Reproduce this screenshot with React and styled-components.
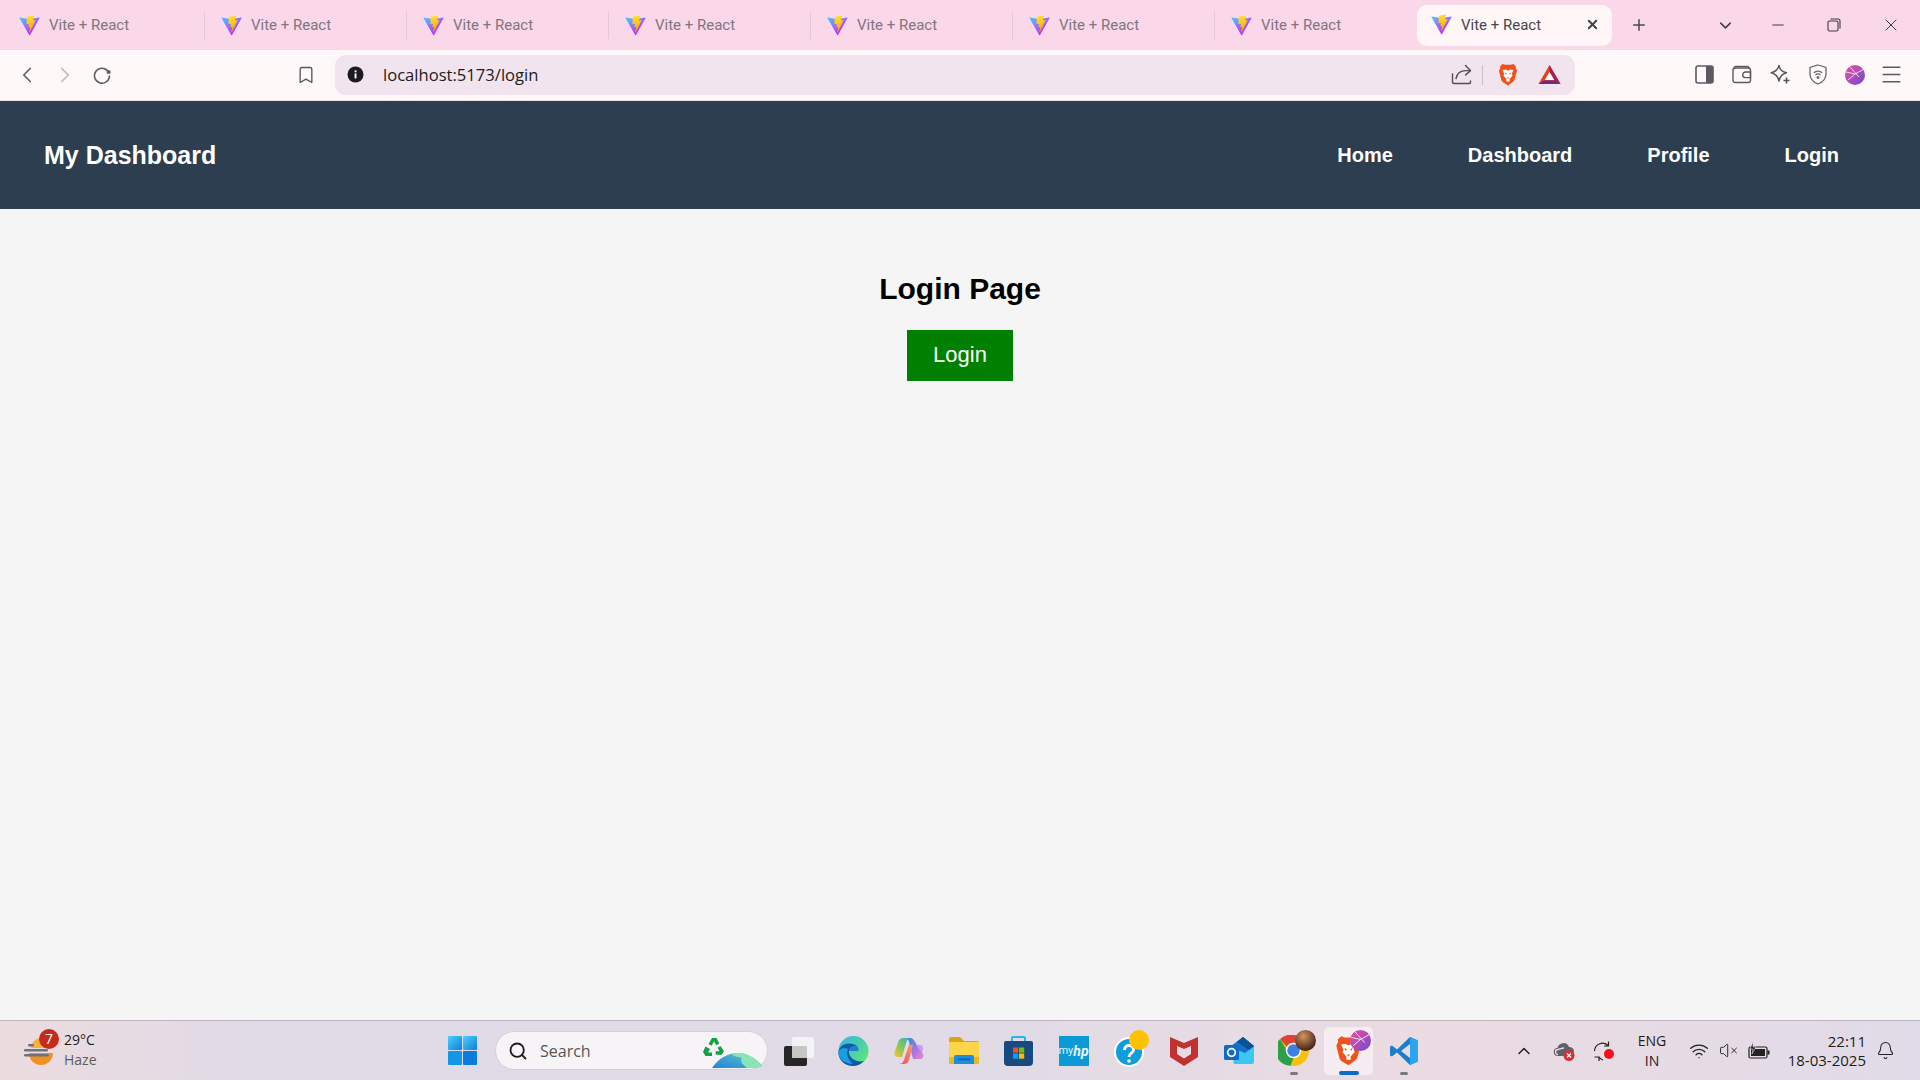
import React from "react";
import styled, { createGlobalStyle } from "styled-components";
import {
  ChevronLeft,
  ChevronRight,
  ChevronDown,
  ChevronUp,
  Bookmark,
  X,
  Plus,
  Minus,
  Search,
  Bell,
  VolumeX,
  Wifi,
  Menu,
} from "lucide-react";

const links = ["Home", "Dashboard", "Profile", "Login"];

function ViteIcon() {
  return (
    <svg width="21" height="21" viewBox="0 0 410 404">
      <defs>
        <linearGradient id="viteA" x1="6" y1="33" x2="235" y2="344" gradientUnits="userSpaceOnUse">
          <stop offset="0" stopColor="#41d1ff" />
          <stop offset="1" stopColor="#bd34fe" />
        </linearGradient>
        <linearGradient id="viteB" x1="194" y1="8" x2="236" y2="292" gradientUnits="userSpaceOnUse">
          <stop offset="0" stopColor="#ffea83" />
          <stop offset="0.08" stopColor="#ffdd35" />
          <stop offset="1" stopColor="#ffa800" />
        </linearGradient>
      </defs>
      <path
        d="M399.6 59.5 215.9 388.2c-3.8 6.8-13.5 6.8-17.4.1L11.2 59.5c-4.2-7.3 2.1-16.2 10.4-14.7l183.9 32.9c1.2.2 2.4.2 3.5 0l180-32.8c8.3-1.5 14.7 7.3 10.6 14.6z"
        fill="url(#viteA)"
      />
      <path
        d="M292.9 1.6 156.9 28.2c-2.2.4-3.9 2.3-4 4.6l-8.4 141.2c-.2 3.3 2.9 5.9 6.1 5.2l37.9-8.8c3.5-.8 6.7 2.3 6 5.9l-11.3 55.2c-.8 3.7 2.7 6.9 6.3 5.8l23.4-7.1c3.6-1.1 7.1 2.1 6.3 5.8l-17.9 86.6c-1.1 5.4 6.1 8.4 9.1 3.7l2-3.1 110.9-221.4c1.9-3.7-1.3-7.9-5.4-7.1l-39 7.5c-3.7.7-6.8-2.7-5.8-6.3l25.500-88.200c1-3.700-2.200-7.100-5.900-6.400z"
        fill="url(#viteB)"
      />
    </svg>
  );
}

function RestoreIcon() {
  return (
    <svg width="14" height="14" viewBox="0 0 14 14" fill="none" stroke="#3c3c40" strokeWidth="1.1">
      <rect x="1" y="3" width="10" height="10" rx="1.5" />
      <path d="M3.5 1h7.5a2 2 0 0 1 2 2v7.5" />
    </svg>
  );
}

function ReloadIcon() {
  return (
    <svg width="20" height="20" viewBox="0 0 20 20" fill="none">
      <path d="M16 6.2A7.5 7.5 0 1 0 17.5 11" stroke="#5f6368" strokeWidth="1.6" strokeLinecap="round" />
      <circle cx="16.6" cy="7" r="2.1" fill="#5f6368" />
    </svg>
  );
}

function InfoIcon() {
  return (
    <svg width="17" height="17" viewBox="0 0 17 17">
      <circle cx="8.5" cy="8.5" r="8" fill="#1b1a20" />
      <rect x="7.6" y="7.4" width="1.9" height="5" fill="#fff" />
      <rect x="7.6" y="4.4" width="1.9" height="1.9" fill="#fff" />
    </svg>
  );
}

function ShareIcon() {
  return (
    <svg width="21" height="21" viewBox="0 0 21 21" fill="none" stroke="#4e4e55" strokeWidth="1.4" strokeLinecap="round" strokeLinejoin="round">
      <path d="M1.500 10v8a1.500 1.500 0 0 0 1.500 1.500h15.500a1.500 1.500 0 0 0 1-1.500v-1" />
      <path d="M5 14.500C6 9.500 10 6.600 15 6.600h4" />
      <path d="M14.500 1.500 19.500 6.600 14.500 11" />
    </svg>
  );
}

function BraveIcon({ size = 20 }) {
  return (
    <svg width={size} height={size * 1.15} viewBox="0 0 20 23">
      <path d="M4.600 1 7 1.800h6L15.400 1l2.600 2.400-.4 1.400 1.400 2.600-2.200 8.600c-.4 1.500-1.200 2.400-2.400 3.200L10 22.400 5.600 19.800c-1.200-.8-2-1.700-2.400-3.200L1 8l1.400-3.200L2 3.400z" fill="#f1511b" />
      <path d="M4.500 7 8.200 6.400l.8 1.100h2l.8-1.100L15.500 7l-1.800 4 .9 1.600-3 3.400v2.400H8.400V16l-3-3.400.9-1.600z" fill="#fff" />
      <path d="M7 9.500 9 11 7.500 11.500zM13 9.500 11 11l1.500.5z" fill="#f1511b" />
      <path d="M8.800 14.500h2.400L10 16z" fill="#f1511b" />
    </svg>
  );
}

function BatIcon() {
  return (
    <svg width="23" height="21" viewBox="0 0 23 21">
      <path d="M11.500 1 22.500 20H.500z" fill="#e8421c" />
      <path d="M11.500 1 22.500 20l-5.600-3.400-5.400-9z" fill="#9e1f63" />
      <path d="M.500 20h22l-5.600-3.500H6.100z" fill="#662d91" />
      <path d="M11.500 8 16.200 16H6.800z" fill="#fff" />
    </svg>
  );
}

function SidebarIcon() {
  return (
    <svg width="19" height="19" viewBox="0 0 19 19">
      <rect x="1" y="1" width="17" height="17" rx="2" fill="none" stroke="#5a5a60" strokeWidth="1.6" />
      <rect x="11" y="1" width="7" height="17" fill="#5a5a60" />
    </svg>
  );
}

function WalletIcon() {
  return (
    <svg width="20" height="19" viewBox="0 0 20 19" fill="none" stroke="#5a5a60" strokeWidth="1.4">
      <path d="M2 4V3.500A2 2 0 0 1 4 1.500h11a2 2 0 0 1 2 2" />
      <rect x="1" y="3" width="17.500" height="14.500" rx="2.200" />
      <path d="M18.500 7h-5a2.600 2.600 0 0 0 0 5.600h5z" />
    </svg>
  );
}

function SparkleIcon() {
  return (
    <svg width="21" height="21" viewBox="0 0 21 21" fill="none">
      <path d="M9 1.500C9.800 5.800 11.500 7.500 16.500 8.800 11.800 10 10 12 9 17 8 12 6 10 1.200 8.800 6 7.500 8 5.800 9 1.500z" stroke="#55555b" strokeWidth="1.400" strokeLinejoin="round" />
      <path d="M16.500 13.500v6M13.500 16.500h6" stroke="#55555b" strokeWidth="1.600" />
    </svg>
  );
}

function ShieldIcon() {
  return (
    <svg width="18" height="21" viewBox="0 0 18 21" fill="none" stroke="#66666c" strokeWidth="1.300">
      <path d="M9 1 17 3.400v6.400c0 5-3.200 8.400-8 10.200C4.200 18.200 1 14.800 1 9.800V3.400z" />
      <path d="M4.800 8.800a6 6 0 0 1 8.400 0M6.500 11a3.500 3.500 0 0 1 5 0" />
      <circle cx="9" cy="13.500" r="0.800" fill="#66666c" />
    </svg>
  );
}

function AvatarIcon({ size = 20 }) {
  return (
    <svg width={size} height={size} viewBox="0 0 20 20">
      <defs>
        <linearGradient id={`avatar${size}`} x1="0" y1="0" x2="1" y2="1">
          <stop offset="0" stopColor="#ec4f98" />
          <stop offset="1" stopColor="#6d4bd8" />
        </linearGradient>
      </defs>
      <circle cx="10" cy="10" r="10" fill={`url(#avatar${size})`} />
      <path d="M1 7 10 9 19 4M5 2 14 12M3 15 10 9" stroke="#fbe6f0" strokeWidth="0.900" fill="none" />
    </svg>
  );
}

function WeatherIcon() {
  return (
    <svg width="32" height="32" viewBox="0 0 32 32">
      <path d="M6 18h24a12 12 0 0 1-24 0z" fill="#f0921d" />
      <path d="M8 13a10 10 0 0 1 20 0z" fill="#f5b13a" />
      <g fill="#6f7178">
        <rect x="5" y="9" width="6" height="2.500" rx="1.200" />
        <rect x="1" y="14" width="24" height="2.500" rx="1.200" />
        <rect x="1" y="19" width="25" height="2.500" rx="1.200" />
      </g>
    </svg>
  );
}

function StartIcon() {
  return (
    <svg width="29" height="29" viewBox="0 0 29 29">
      <defs>
        <linearGradient id="winA" x1="0" y1="0" x2="1" y2="1">
          <stop offset="0" stopColor="#4fd0fb" />
          <stop offset="1" stopColor="#0b7fdb" />
        </linearGradient>
      </defs>
      <rect x="0" y="0" width="14" height="14" fill="url(#winA)" rx="1" />
      <rect x="15" y="0" width="14" height="14" fill="url(#winA)" rx="1" />
      <rect x="0" y="15" width="14" height="14" fill="#1296e6" rx="1" />
      <rect x="15" y="15" width="14" height="14" fill="#0a7cdc" rx="1" />
    </svg>
  );
}

function SearchArt() {
  return (
    <svg width="60" height="32" viewBox="0 0 60 32">
      <defs>
        <linearGradient id="earth" x1="0" y1="1" x2="1" y2="0">
          <stop offset="0" stopColor="#2a7fdc" />
          <stop offset="0.5" stopColor="#3fa6d0" />
          <stop offset="1" stopColor="#6fcfb8" />
        </linearGradient>
      </defs>
      <path d="M9 1 5.500 7l3 1.800L11 4.600l2.300 3.700 3-1.700L13.500 1zM2.500 9.500 0 15l2.500 4H9v-3.500H5l2-3.500zM17.500 9l-3 1.700 2 3.500h-3.800v3.500h5.800l2.500-3.500z" fill="#12a144" />
      <path d="M9 31C15 21.500 25 16 35 16c9.500 0 19 6 24 13-5 1.500-11 2-16 2z" fill="url(#earth)" />
      <path d="M29 17c2 3 5 3 8 3 3 1 0 3 2 6s3 3 5 5h11l4-2c-5-7-14-13-24-13-2 0-4 0-6 1z" fill="#8be4b6" />
    </svg>
  );
}

function TaskViewIcon() {
  return (
    <svg width="32" height="30" viewBox="0 0 32 30">
      <rect x="1" y="10" width="23" height="20" rx="2" fill="#262626" />
      <rect x="9" y="1" width="22" height="21" rx="2" fill="#f6f6f6" opacity="0.85" />
      <rect x="9" y="10" width="15" height="12" fill="#c4c4c4" opacity="0.9" />
    </svg>
  );
}

function EdgeIcon() {
  return (
    <svg width="31" height="30" viewBox="0 0 31 30">
      <defs>
        <linearGradient id="edgeA" x1="0" y1="0" x2="1" y2="1">
          <stop offset="0" stopColor="#2fb4e8" />
          <stop offset="1" stopColor="#66eb6e" />
        </linearGradient>
      </defs>
      <circle cx="15.500" cy="15" r="15" fill="url(#edgeA)" />
      <path d="M.5 16C1 9 9 6 15 8c4 1 6 4 5 7h-9c-1 6 7 12 15 10-3 3-7 5-11 5C7 30 0 24 .5 16z" fill="#0f5aa6" />
      <path d="M.5 16C2 12 7 11 10 13c-2 5 0 11 5 15C7 28 0 23 .5 16z" fill="#1b9de2" />
      <path d="M11 15c0-4 5-7 9-4 1 1 1 3 0 4z" fill="#2a8fdc" opacity="0.7" />
    </svg>
  );
}

function CopilotIcon() {
  return (
    <svg width="30" height="28" viewBox="0 0 30 28">
      <defs>
        <linearGradient id="copA" x1="0" y1="0" x2="1" y2="1">
          <stop offset="0" stopColor="#1f8fe0" />
          <stop offset="0.6" stopColor="#b06ee0" />
          <stop offset="1" stopColor="#f08ac0" />
        </linearGradient>
        <linearGradient id="copB" x1="1" y1="0" x2="0" y2="1">
          <stop offset="0" stopColor="#2fa8d8" />
          <stop offset="0.5" stopColor="#7cc85a" />
          <stop offset="1" stopColor="#ffc233" />
        </linearGradient>
        <linearGradient id="copC" x1="1" y1="0" x2="0" y2="1">
          <stop offset="0" stopColor="#ff9a5a" />
          <stop offset="1" stopColor="#ec4a6a" />
        </linearGradient>
      </defs>
      <path d="M9 1h8c-3 0-4 2-5 5L8 20H3.500C1 20 0 18 .5 15.500L4.500 4C5.500 2 7 1 9 1z" fill="url(#copB)" />
      <path d="M13 1h3c3 0 4 2 5 4l7.500 11c2 3 1 6-3 6H19l-4-17c-.4-2-1-3-2-4z" fill="url(#copA)" opacity="0.95" />
      <path d="M15 8h4l-4 15c-1 3-3 4-5 4H5c2 0 4-1 5-4z" fill="url(#copC)" />
      <path d="M22 8h4c2 0 3.500 2 3 4l-1 4z" fill="#c99cf0" />
    </svg>
  );
}

function FolderIcon() {
  return (
    <svg width="30" height="27" viewBox="0 0 30 27">
      <path d="M0 2a2 2 0 0 1 2-2h9l4 4h13a2 2 0 0 1 2 2v4H0z" fill="#dda40f" />
      <path d="M0 5h30v21a1 1 0 0 1-1 1H1a1 1 0 0 1-1-1z" fill="#fdd54a" />
      <path d="M0 20h30v6a1 1 0 0 1-1 1H1a1 1 0 0 1-1-1z" fill="#efb81a" />
      <path d="M5 20a2 2 0 0 1 2-2h16a2 2 0 0 1 2 2v7H5z" fill="#1b8fdc" />
      <rect x="9" y="21.500" width="12" height="1.800" rx="0.900" fill="#0d5ea8" />
    </svg>
  );
}

function StoreIcon() {
  return (
    <svg width="29" height="30" viewBox="0 0 29 30">
      <path d="M8 6V2a1 1 0 0 1 1-1h11a1 1 0 0 1 1 1v4" fill="none" stroke="#29b4ec" strokeWidth="2" />
      <path d="M0 7a2 2 0 0 1 2-2h25a2 2 0 0 1 2 2v19a4 4 0 0 1-4 4H4a4 4 0 0 1-4-4z" fill="#174a80" />
      <rect x="9" y="11.500" width="5.200" height="5.200" fill="#f25022" />
      <rect x="15" y="11.500" width="5.200" height="5.200" fill="#7fba00" />
      <rect x="9" y="17.500" width="5.200" height="5.200" fill="#00a4ef" />
      <rect x="15" y="17.500" width="5.200" height="5.200" fill="#ffb900" />
    </svg>
  );
}

function McafeeIcon() {
  return (
    <svg width="28" height="30" viewBox="0 0 28 30">
      <path d="M0 1 14 7 28 1v20L14 30 0 21z" fill="#c23232" />
      <path d="M7 10 14 13 21 10v8l-7 4.500L7 18z" fill="#e7dce4" />
    </svg>
  );
}

function OutlookIcon() {
  return (
    <svg width="30" height="27" viewBox="0 0 30 27">
      <path d="M6 10 19 0l11 9v16a2 2 0 0 1-2 2H10z" fill="#3cc6f4" />
      <path d="M6 10 19 0l11 9-9 7z" fill="#1272c8" />
      <path d="M19 0l11 9-5 4-12-8z" fill="#0a5196" />
      <rect x="0" y="8" width="15" height="15" rx="1.500" fill="#0f6cc4" />
      <circle cx="7.500" cy="15.500" r="3.800" fill="none" stroke="#fff" strokeWidth="1.800" />
    </svg>
  );
}

function ChromeIcon() {
  return (
    <svg width="31" height="31" viewBox="0 0 30 30">
      <circle cx="15" cy="15" r="15" fill="#f4c20d" />
      <path d="M15 0a15 15 0 0 1 13 7.500H15a7.500 7.500 0 0 0-6.500 3.750L2 3.800A15 15 0 0 1 15 0z" fill="#dd4336" />
      <path d="M2 3.800 8.500 15 15 22.500l-3 7.200A15 15 0 0 1 2 3.800z" fill="#2f9e48" />
      <circle cx="15" cy="15" r="7.500" fill="#fff" />
      <circle cx="15" cy="15" r="6" fill="#3e7fe6" />
    </svg>
  );
}

function VscodeIcon() {
  return (
    <svg width="30" height="30" viewBox="0 0 30 30">
      <path d="M21 1 29 4.500v21L21 29 8 16.500 3 20.500 1 19.500v-9l2-1 5 4z" fill="#1a7fc8" />
      <path d="M21 1 29 4.500v21L21 29z" fill="#2aa5ee" />
      <path d="M21 8 12 15l9 7z" fill="#e4dbe6" />
    </svg>
  );
}

function HelpIcon() {
  return (
    <svg width="44" height="44" viewBox="0 0 44 44">
      <circle cx="22" cy="23" r="15" fill="#fff" />
      <circle cx="22" cy="23" r="13" fill="#0f9ddb" />
      <path d="M17.500 21c0-6 9-6 9 0 0 3.500-4.500 3-4.500 7" fill="none" stroke="#fff" strokeWidth="2.800" />
      <circle cx="22" cy="32" r="1.800" fill="#fff" />
      <circle cx="32" cy="11" r="10" fill="#fec200" />
    </svg>
  );
}

function CloudIcon() {
  return (
    <svg width="22" height="20" viewBox="0 0 22 20">
      <path d="M5 15a4 4 0 0 1-.500-8A6 6 0 0 1 16 6a4.500 4.500 0 0 1 1 9z" fill="#5f6166" />
      <path d="M5 13.500a2.500 2.500 0 0 1 0-5C7 8 9 7 11 7" fill="none" stroke="#e9dce3" strokeWidth="1.300" />
      <circle cx="16" cy="14.500" r="5.500" fill="#d6313a" />
      <path d="M14 12.500l4 4m0-4-4 4" stroke="#fff" strokeWidth="1.300" />
    </svg>
  );
}

function SyncIcon() {
  return (
    <svg width="22" height="22" viewBox="0 0 22 22">
      <path d="M1.500 11a8 8 0 0 1 14-5M15.500 1.500V6H11" fill="none" stroke="#222" strokeWidth="1.200" />
      <path d="M1.500 17H6v4M6 17a8 8 0 0 0 4 3" fill="none" stroke="#222" strokeWidth="1.200" />
      <circle cx="16" cy="14" r="5" fill="#f6101c" />
    </svg>
  );
}

function BatteryIcon() {
  return (
    <svg width="22" height="18" viewBox="0 0 22 18">
      <rect x="1" y="5" width="18" height="11" rx="1.500" fill="none" stroke="#222" strokeWidth="1.200" />
      <rect x="3" y="7" width="14" height="7" fill="#222" />
      <rect x="19.500" y="8.500" width="2" height="4" fill="#222" />
      <path d="M5 0 2 7h3l-1 5 4-7H5z" fill="#222" stroke="#e2dbe6" strokeWidth="0.600" />
    </svg>
  );
}

function App() {
  return (
    <Page>
      <GlobalStyle />
      <TabStrip>
        {Array.from({ length: 7 }).map((_, i) => (
          <Tab key={i}>
            <ViteIcon />
            <TabTitle>Vite + React</TabTitle>
          </Tab>
        ))}
        <ActiveTab>
          <ViteIcon />
          <ActiveTitle>Vite + React</ActiveTitle>
          <X size={15} strokeWidth={3} color="#3f3f44" />
        </ActiveTab>
        <NewTab>
          <Plus size={18} strokeWidth={2} />
        </NewTab>
        <WindowControls>
          <WindowButton $w={50}>
            <ChevronDown size={19} strokeWidth={1.8} />
          </WindowButton>
          <WindowButton $w={56}>
            <Minus size={18} strokeWidth={1.3} />
          </WindowButton>
          <WindowButton $w={56}>
            <RestoreIcon />
          </WindowButton>
          <WindowButton $w={58}>
            <X size={20} strokeWidth={1.2} />
          </WindowButton>
        </WindowControls>
      </TabStrip>

      <Toolbar>
        <NavButton>
          <ChevronLeft size={26} strokeWidth={1.6} color="#5f6368" />
        </NavButton>
        <NavButton>
          <ChevronRight size={26} strokeWidth={1.6} color="#bcbcc0" />
        </NavButton>
        <NavButton>
          <ReloadIcon />
        </NavButton>
        <BookmarkButton>
          <Bookmark size={20} strokeWidth={1.6} color="#55555b" />
        </BookmarkButton>
        <AddressBar>
          <InfoIcon />
          <Url>localhost:5173/login</Url>
          <AddressActions>
            <ShareIcon />
            <ActionDivider />
            <BraveIcon />
            <BatSlot>
              <BatIcon />
            </BatSlot>
          </AddressActions>
        </AddressBar>
        <ToolIcons>
          <SidebarIcon />
          <WalletIcon />
          <SparkleIcon />
          <ShieldIcon />
          <AvatarIcon />
          <MenuSlot>
            <Menu size={25} strokeWidth={1.4} color="#5a5a60" />
          </MenuSlot>
        </ToolIcons>
      </Toolbar>

      <NavBar>
        <Brand>My Dashboard</Brand>
        <NavLinks>
          {links.map((link) => (
            <NavLink key={link}>{link}</NavLink>
          ))}
        </NavLinks>
      </NavBar>

      <Main>
        <Heading>Login Page</Heading>
        <LoginButton>Login</LoginButton>
      </Main>

      <Taskbar>
        <Weather>
          <WeatherGlyph>
            <WeatherIcon />
            <Badge>7</Badge>
          </WeatherGlyph>
          <WeatherText>
            <Temp>29°C</Temp>
            <Haze>Haze</Haze>
          </WeatherText>
        </Weather>

        <Center>
          <StartIcon />
          <SearchBox>
            <Search size={20} strokeWidth={2.2} color="#1c1c1c" />
            <SearchLabel>Search</SearchLabel>
            <SearchArtSlot>
              <SearchArt />
            </SearchArtSlot>
          </SearchBox>
          <AppIcons>
            <AppIcon><TaskViewIcon /></AppIcon>
            <AppIcon><EdgeIcon /></AppIcon>
            <AppIcon><CopilotIcon /></AppIcon>
            <AppIcon><FolderIcon /></AppIcon>
            <AppIcon><StoreIcon /></AppIcon>
            <AppIcon><MyHp>my<i>hp</i></MyHp></AppIcon>
            <AppIcon><HelpIcon /></AppIcon>
            <AppIcon><McafeeIcon /></AppIcon>
            <AppIcon><OutlookIcon /></AppIcon>
            <AppIcon $dot>
              <ChromeIcon />
              <ChromeBadge />
            </AppIcon>
            <AppIcon $active>
              <BraveIcon size={27} />
              <BraveBadge>
                <AvatarIcon size={21} />
              </BraveBadge>
            </AppIcon>
            <AppIcon $dot><VscodeIcon /></AppIcon>
          </AppIcons>
        </Center>

        <Tray>
          <TrayIcon $w={40}><ChevronUp size={20} strokeWidth={1.8} color="#222" /></TrayIcon>
          <TrayIcon $w={40}><CloudIcon /></TrayIcon>
          <TrayIcon $w={40}><SyncIcon /></TrayIcon>
          <Lang>
            <span>ENG</span>
            <span>IN</span>
          </Lang>
          <TrayIcon $w={30}><Wifi size={20} strokeWidth={1.6} color="#222" /></TrayIcon>
          <TrayIcon $w={28}><VolumeX size={19} strokeWidth={1.2} color="#222" /></TrayIcon>
          <TrayIcon $w={34}><BatteryIcon /></TrayIcon>
          <Clock>
            <span>22:11</span>
            <span>18-03-2025</span>
          </Clock>
          <TrayIcon $w={38}><Bell size={19} strokeWidth={1.3} color="#222" /></TrayIcon>
        </Tray>
      </Taskbar>
    </Page>
  );
}

const GlobalStyle = createGlobalStyle`
  html, body {
    margin: 0;
    padding: 0;
    background: #f5f5f5;
  }
  * {
    box-sizing: border-box;
  }
`;

const Page = styled.div`
  width: 1920px;
  height: 1080px;
  display: flex;
  flex-direction: column;
  overflow: hidden;
  font-family: "Liberation Sans", Arial, sans-serif;
`;

const TabStrip = styled.div`
  height: 50px;
  flex: none;
  display: flex;
  align-items: center;
  padding-left: 3px;
  background: #fad7e9;
  font-family: Roboto, sans-serif;
`;

const Tab = styled.div`
  width: 202px;
  height: 28px;
  display: flex;
  align-items: center;
  gap: 9px;
  padding-left: 16px;
  border-right: 1px solid #e3c8d8;

  &:nth-child(7) {
    border-right: none;
  }
`;

const TabTitle = styled.span`
  font-size: 15px;
  color: #7f7680;
`;

const ActiveTab = styled.div`
  width: 195px;
  height: 41px;
  margin-top: 1px;
  display: flex;
  align-items: center;
  padding: 0 12px 2px 14px;
  background: #fff7f7;
  border-radius: 10px;
`;

const ActiveTitle = styled.span`
  flex: 1;
  margin-left: 9px;
  font-size: 15px;
  color: #46464c;
`;

const NewTab = styled.div`
  width: 54px;
  display: flex;
  justify-content: center;
  color: #4a4a50;
`;

const WindowControls = styled.div`
  margin-left: auto;
  display: flex;
  align-items: center;
  color: #3c3c40;
`;

const WindowButton = styled.div`
  width: ${({ $w }) => $w}px;
  display: flex;
  justify-content: center;
`;

const Toolbar = styled.div`
  height: 51px;
  flex: none;
  display: flex;
  align-items: center;
  padding: 0 0 1px 8px;
  background: #fff8f8;
  border-bottom: 1px solid #e8e2e4;
`;

const NavButton = styled.div`
  width: 38px;
  display: flex;
  justify-content: center;

  &:nth-child(3) {
    width: 36px;
  }
`;

const BookmarkButton = styled.div`
  width: 28px;
  margin-left: 172px;
  display: flex;
  justify-content: center;
`;

const AddressBar = styled.div`
  width: 1240px;
  height: 40px;
  margin-left: 15px;
  display: flex;
  align-items: center;
  padding: 0 0 0 12px;
  background: #f1e4ef;
  border-radius: 11px;
  font-family: "Open Sans", sans-serif;
`;

const Url = styled.span`
  margin-left: 19px;
  font-size: 16.6px;
  color: #1d1b20;
`;

const AddressActions = styled.div`
  margin-left: auto;
  padding-right: 14px;
  display: flex;
  align-items: center;
`;

const ActionDivider = styled.div`
  width: 1px;
  height: 20px;
  margin: 0 15px 0 10px;
  background: #c9c0c8;
`;

const BatSlot = styled.div`
  display: flex;
  margin-left: 20px;
`;

const ToolIcons = styled.div`
  margin-left: 120px;
  display: flex;
  align-items: center;
  gap: 18px;
`;

const MenuSlot = styled.div`
  display: flex;
  margin-left: -4px;
`;

const NavBar = styled.header`
  height: 108px;
  flex: none;
  display: flex;
  align-items: center;
  justify-content: space-between;
  padding: 0 81px 0 44px;
  background: #2c3e50;
  color: #fff;
`;

const Brand = styled.div`
  font-size: 25px;
  font-weight: 700;
`;

const NavLinks = styled.nav`
  display: flex;
  gap: 75px;
`;

const NavLink = styled.a`
  font-size: 20px;
  font-weight: 700;
  color: #fff;
`;

const Main = styled.main`
  flex: 1;
  display: flex;
  flex-direction: column;
  align-items: center;
  padding-top: 62px;
  background: #f5f5f5;
`;

const Heading = styled.h2`
  margin: 0;
  font-size: 30px;
  line-height: 35px;
  font-weight: 700;
  color: #000;
`;

const LoginButton = styled.button`
  width: 106px;
  height: 51px;
  margin-top: 24px;
  padding: 0 0 2px;
  border: none;
  background: #008000;
  color: #fff;
  font-family: "Liberation Sans", Arial, sans-serif;
  font-size: 22px;
`;

const Taskbar = styled.footer`
  height: 60px;
  flex: none;
  display: flex;
  align-items: center;
  border-top: 1px solid #bdb6bf;
  background: linear-gradient(90deg, #ecdcdf 0%, #dfdae6 14%, #e0dbe6 50%, #ecdbe2 75%, #e0dbe8 100%);
  font-family: "Open Sans", sans-serif;
  color: #1c1c1c;
`;

const Weather = styled.div`
  width: 448px;
  flex: none;
  display: flex;
  align-items: center;
  padding-left: 23px;
  gap: 9px;
`;

const WeatherGlyph = styled.div`
  position: relative;
  width: 32px;
  height: 32px;
`;

const Badge = styled.span`
  position: absolute;
  top: -6px;
  right: -4px;
  width: 20px;
  height: 20px;
  border-radius: 50%;
  background: #c42b1c;
  color: #fff;
  font-size: 14px;
  line-height: 20px;
  text-align: center;
`;

const WeatherText = styled.div`
  display: flex;
  flex-direction: column;
  margin-top: -1px;
  font-size: 14px;
  line-height: 20px;
`;

const Temp = styled.span`
  color: #1c1c1c;
`;

const Haze = styled.span`
  color: #5c5c60;
`;

const Center = styled.div`
  display: flex;
  align-items: center;
`;

const SearchBox = styled.div`
  position: relative;
  width: 273px;
  height: 39px;
  margin-left: 18px;
  display: flex;
  align-items: center;
  padding-left: 12px;
  background: #f7f4f7;
  border: 1px solid #d5d0d6;
  border-radius: 20px;
`;

const SearchLabel = styled.span`
  margin-left: 12px;
  font-size: 16px;
  color: #555;
`;

const SearchArtSlot = styled.div`
  position: absolute;
  right: 4px;
  bottom: 0;
  height: 32px;
`;

const AppIcons = styled.div`
  margin-left: 3px;
  display: flex;
  align-items: center;
`;

const AppIcon = styled.div`
  position: relative;
  width: 55px;
  height: 48px;
  display: flex;
  align-items: center;
  justify-content: center;

  &::before {
    content: "";
    display: ${({ $active }) => ($active ? "block" : "none")};
    position: absolute;
    top: 0;
    bottom: 0;
    left: 3px;
    right: 3px;
    border-radius: 5px;
    background: #f5edf2;
  }

  svg {
    position: relative;
  }

  &::after {
    content: "";
    display: ${({ $active, $dot }) => ($active || $dot ? "block" : "none")};
    position: absolute;
    bottom: 0;
    left: 50%;
    transform: translateX(-50%);
    width: ${({ $active }) => ($active ? "20px" : "8px")};
    height: ${({ $active }) => ($active ? "4px" : "3px")};
    border-radius: 2px;
    background: ${({ $active }) => ($active ? "#0f6cc4" : "#7a7a80")};
  }
`;

const MyHp = styled.div`
  width: 30px;
  height: 30px;
  display: flex;
  align-items: center;
  justify-content: center;
  background: #0b9ad6;
  color: #e8f6fc;
  font-family: Roboto, sans-serif;
  font-size: 11px;

  i {
    font-weight: 700;
    font-size: 14px;
  }
`;

const ChromeBadge = styled.div`
  position: absolute;
  top: 3px;
  right: 5px;
  width: 21px;
  height: 21px;
  border-radius: 50%;
  background: radial-gradient(circle at 40% 30%, #d6955c, #4a2a1c 70%);
`;

const BraveBadge = styled.div`
  position: absolute;
  top: 3px;
  right: 5px;
  height: 21px;
`;

const Tray = styled.div`
  margin-left: auto;
  padding-right: 16px;
  display: flex;
  align-items: center;
`;

const TrayIcon = styled.div`
  width: ${({ $w }) => $w}px;
  display: flex;
  justify-content: center;
`;

const Lang = styled.div`
  width: 60px;
  padding-right: 4px;
  display: flex;
  flex-direction: column;
  align-items: center;
  font-size: 14px;
  line-height: 20px;
`;

const Clock = styled.div`
  width: 90px;
  display: flex;
  flex-direction: column;
  align-items: flex-end;
  font-size: 15px;
  line-height: 19px;
`;

export default App;
